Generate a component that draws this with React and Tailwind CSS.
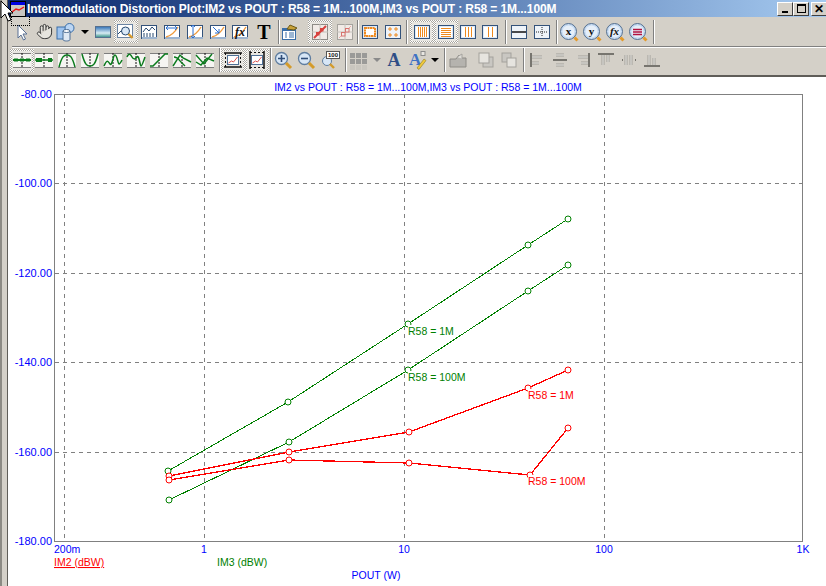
import { Hand } from "lucide-react";

const Ic = ({ children }) => (
  <svg width="20" height="20" viewBox="0 0 20 20" fill="none">
    {children}
  </svg>
);

// plain toolbar slot, sel gets the dotted "pressed" frame
function T({ ml, sel, children }) {
  if (sel) {
    return (
      <div className={`${ml} w-[24px] h-[23px] flex-none p-[2px] bg-[repeating-conic-gradient(#ffffff_0%_25%,#a9a69f_0%_50%)] bg-[length:2px_2px]`}>
        <div className="w-full h-full flex items-center justify-center bg-[#e8e6e1]">{children}</div>
      </div>
    );
  }
  return <div className={`${ml} w-[20px] h-[20px] flex-none flex items-center justify-center`}>{children}</div>;
}

const Sep = ({ ml }) => (
  <div className={`${ml} w-[2px] h-[24px] flex-none border-l border-r border-l-[#808080] border-r-white`} />
);

const Drop = ({ ml, gray }) => (
  <div className={`${ml} w-[8px] flex-none flex justify-center`}>
    <div className={`w-0 h-0 border-l-[4px] border-r-[4px] border-t-[4px] border-l-transparent border-r-transparent ${gray ? "border-t-[#8a8a8a]" : "border-t-black"}`} />
  </div>
);

// --- row 1 icons
const Arrow = () => (
  <Ic>
    <path d="M6 3v13l3-3 2.5 5 2-1-2.5-5h4z" fill="#fff" stroke="#5a7194" />
  </Ic>
);
const Stack = () => (
  <Ic>
    <rect x="1" y="5" width="9" height="12" fill="#9ec3ee" stroke="#3a6ea8" />
    <circle cx="13.5" cy="6" r="4.5" fill="#bcd6f4" stroke="#3a6ea8" />
    <path d="M7 9v8.5c0 2 7 2 7 0V9z" fill="#dfe8f3" stroke="#4f6f95" />
    <ellipse cx="10.5" cy="9" rx="3.5" ry="1.5" fill="#fff" stroke="#4f6f95" />
  </Ic>
);
const Picture = () => (
  <Ic>
    <defs>
      <linearGradient id="sky" x1="0" y1="0" x2="0" y2="1">
        <stop offset="0" stopColor="#2f6fb5" />
        <stop offset="0.6" stopColor="#d7ecf3" />
        <stop offset="1" stopColor="#2f8c83" />
      </linearGradient>
    </defs>
    <rect x="2.5" y="4.5" width="15" height="11" fill="url(#sky)" stroke="#55708f" />
  </Ic>
);
const Frame = ({ children }) => (
  <Ic>
    <rect x="2.5" y="3.5" width="15" height="13" fill="#fff" stroke="#33527a" />
    <rect x="3" y="15" width="15" height="2" fill="#9db4cf" />
    {children}
  </Ic>
);
const Curve = () => <path d="M4 15c5-1 9-5 12-10" stroke="#ef9a3c" strokeWidth="1.4" />;
const ZoomBox = () => (
  <Ic>
    <rect x="1.5" y="2.5" width="15" height="13" fill="#fff" stroke="#6b84a3" />
    <path d="M2 12l3-3 2 1" stroke="#27496f" />
    <circle cx="9.5" cy="9" r="4" fill="#d9e8f7" stroke="#27496f" />
    <path d="M12.5 12l4 4" stroke="#d99a2b" strokeWidth="2.4" />
  </Ic>
);
const ChartTable = () => (
  <Frame>
    <path d="M4 10l3-4 3 3 3-4 3 3" stroke="#27496f" />
    <path d="M4 12h12M4 14h12" stroke="#27496f" strokeDasharray="2 1" />
  </Frame>
);
const FitX = () => (
  <Frame>
    <Curve />
    <path d="M4 6h11M4 6l2-2M4 6l2 2M15 6l-2-2M15 6l-2 2" stroke="#2a6fd0" />
  </Frame>
);
const FitY = () => (
  <Frame>
    <Curve />
    <path d="M8 3v13M8 3l-2 2M8 3l2 2M8 16l-2-2M8 16l2-2" stroke="#2a6fd0" />
  </Frame>
);
const FitD = () => (
  <Frame>
    <Curve />
    <path d="M5 5l6 6M11 11V7M11 11H7" stroke="#2a6fd0" />
  </Frame>
);
const Fx = () => (
  <Frame>
    <Curve />
    <text x="5" y="14" fontFamily="Liberation Serif, serif" fontStyle="italic" fontWeight="700" fontSize="12" fill="#111">fx</text>
  </Frame>
);
const BigT = () => (
  <span className="font-['Liberation_Serif',serif] font-bold text-[20px] leading-none text-black">T</span>
);
const Props = () => (
  <Ic>
    <rect x="2.5" y="6.5" width="13" height="11" fill="#fff" stroke="#3a6ea8" />
    <rect x="3" y="7" width="12" height="2" fill="#3a6ea8" />
    <path d="M5 11h2M9 11h5M5 13h2M9 13h5M5 15h2M9 15h5" stroke="#3a6ea8" />
    <path d="M7 7l3-4 7 3-3 2z" fill="#c9a23a" stroke="#6d5a16" />
  </Ic>
);
const Dots = ({ faded }) => (
  <Ic>
    <rect x="2.5" y="2.5" width="15" height="15" fill="#f1ebe7" stroke={faded ? "#a5a39e" : "#8e8c87"} />
    <path d="M2 10h16M10 2v16" stroke="#c4c1bb" />
    <path d="M4 16L16 4" stroke={faded ? "#e6a9a5" : "#d8423e"} strokeWidth={faded ? 1 : 2} />
    <rect x={faded ? 6.5 : 6} y={faded ? 10.5 : 10} width="3.5" height="3.5" fill={faded ? "#f1ebe7" : "#d8423e"} stroke={faded ? "#d8726e" : "none"} />
    <rect x={faded ? 10.5 : 10} y={faded ? 6.5 : 6} width="3.5" height="3.5" fill={faded ? "#f1ebe7" : "#d8423e"} stroke={faded ? "#d8726e" : "none"} />
  </Ic>
);
const OrangeBox = () => (
  <Ic>
    <rect x="2.5" y="3.5" width="15" height="13" fill="#dfe9f5" stroke="#33527a" />
    <rect x="5" y="6" width="10" height="8" fill="#fff" stroke="#ef8a1e" strokeWidth="2" strokeDasharray="2 0.5" />
  </Ic>
);
const Plus4 = () => (
  <Ic>
    <rect x="2.5" y="3.5" width="15" height="13" fill="#eef3f9" stroke="#33527a" />
    <path d="M7 5v4M5 7h4M13 5v4M11 7h4M7 11v4M5 13h4M13 11v4M11 13h4" stroke="#ef8a1e" />
  </Ic>
);
const Bars = ({ n, horiz }) => {
  const xs = n === 5 ? [6, 8, 10, 12, 14] : n === 3 ? [7, 10, 13] : [8, 12];
  return (
    <Ic>
      <rect x="2.5" y="3.5" width="15" height="13" fill="#dfe9f5" stroke="#33527a" />
      <rect x="4" y="5" width="12" height="10" fill="#fff" />
      {xs.map((x) =>
        horiz ? (
          <path key={x} d={`M5 ${x + 0.5}h10`} stroke="#ef8a1e" />
        ) : (
          <path key={x} d={`M${x + 0.5} 5v10`} stroke="#ef8a1e" />
        )
      )}
    </Ic>
  );
};
const HLine = () => (
  <Ic>
    <rect x="2.5" y="3.5" width="15" height="13" fill="#eef3f9" stroke="#33527a" />
    <path d="M3 10h14" stroke="#111" strokeWidth="1.5" />
  </Ic>
);
const Cross = () => (
  <Ic>
    <rect x="2.5" y="3.5" width="15" height="13" fill="#eef3f9" stroke="#33527a" />
    <path d="M4 10h12M10 5v10" stroke="#222" strokeDasharray="1 1" />
  </Ic>
);
const Lens = ({ children }) => (
  <Ic>
    <circle cx="9.5" cy="9.5" r="8" fill="#c5daf2" stroke="#55708f" />
    <circle cx="9.5" cy="9.5" r="6" fill="#e6eff9" />
    <path d="M15.5 15.5l3 3" stroke="#e49a2a" strokeWidth="3" />
    {children}
  </Ic>
);
const LensLetter = ({ c, italic }) => (
  <Lens>
    <text x="9.5" y="13" textAnchor="middle" fontFamily="Liberation Serif, serif" fontWeight="700" fontStyle={italic ? "italic" : "normal"} fontSize="11" fill="#111">
      {c}
    </text>
  </Lens>
);
const LensLines = () => (
  <Lens>
    <path d="M5 7.5h9M5 10h9M5 12.5h9" stroke="#b3123f" strokeWidth="1.4" />
  </Lens>
);

// --- row 2 icons, green trace over a dashed centre line
const Trace = ({ children }) => (
  <Ic>
    <rect x="1" y="3" width="18" height="14" fill="#f6f5f2" />
    <path d="M1 3.5h18M1 17.5h18" stroke="#7d7d7d" />
    <path d="M10 3v15" stroke="#111" strokeDasharray="2 1" />
    {children}
  </Ic>
);
const G = ({ d, w = 1.4 }) => <path d={d} stroke="#0a7a1c" strokeWidth={w} />;
const MagGlass = ({ sign }) => (
  <Ic>
    <circle cx="8.5" cy="8.5" r="6" fill="#d7e6f6" stroke="#5f7d9f" strokeWidth="1.3" />
    <path d="M13 13l5 5" stroke="#d49b2a" strokeWidth="3" />
    <path d={sign === "+" ? "M5 8.5h7M8.5 5v7" : "M5 8.5h7"} stroke="#2f4d78" strokeWidth="1.6" />
  </Ic>
);
const Mag100 = () => (
  <Ic>
    <circle cx="7" cy="11" r="4.5" fill="#d7e6f6" stroke="#5f7d9f" />
    <path d="M10 14l4 4" stroke="#d49b2a" strokeWidth="2.4" />
    <rect x="6.5" y="1.5" width="13" height="7" fill="#fff" stroke="#555" />
    <text x="13" y="7.4" textAnchor="middle" fontFamily="Liberation Sans, sans-serif" fontWeight="700" fontSize="6" fill="#111">100</text>
  </Ic>
);
const Tiles = () => (
  <Ic>
    {[3, 9, 15].map((y) =>
      [2, 8, 14].map((x) => <rect key={`${x}${y}`} x={x} y={y} width="5" height="5" fill={y === 15 ? "#c9c6bf" : "#9a9a98"} />)
    )}
  </Ic>
);
const LetterA = () => (
  <span className="font-['Liberation_Serif',serif] font-bold text-[18px] leading-none text-[#2f4e86]">A</span>
);
const LetterPen = () => (
  <Ic>
    <text x="1" y="15" fontFamily="Liberation Serif, serif" fontWeight="700" fontSize="17" fill="#3f72c4">A</text>
    <path d="M9 18l7-9 2 1.5-7 9z" fill="#f0c93b" stroke="#8d7a22" strokeWidth="0.6" />
    <rect x="13" y="1.5" width="4" height="4" fill="#e9e7e2" stroke="#8d8d8d" />
  </Ic>
);
const Layer = () => (
  <Ic>
    <path d="M2 9h6l3-4 1 3h6v9H2z" fill="#b5b3ae" stroke="#8e8c87" />
    <path d="M9 7l5-3v5" fill="#dedcd7" stroke="#a5a39e" />
  </Ic>
);
const Front = () => (
  <Ic>
    <rect x="7" y="7" width="10" height="10" fill="#c9c7c2" stroke="#a3a19c" />
    <rect x="3" y="3" width="10" height="10" fill="#e6e4df" stroke="#a3a19c" />
  </Ic>
);
const Back = () => (
  <Ic>
    <rect x="3" y="3" width="9" height="9" fill="#c9c7c2" stroke="#a3a19c" />
    <rect x="8" y="8" width="9" height="9" fill="#e6e4df" stroke="#a3a19c" />
  </Ic>
);
const Align = ({ d, bar }) => (
  <Ic>
    <path d={bar} stroke="#77756f" strokeWidth="2" />
    <path d={d} stroke="#a19f99" strokeWidth="3" />
    <path d={d} stroke="#ecebe7" strokeWidth="1" />
  </Ic>
);

const row1Bar = "h-[29px] flex items-center";
const row2Bar = "h-[27px] pb-[3px] flex items-center";

function Toolbars() {
  return (
    <div className="bg-[#d4d0c8] border-b-2 border-b-[#5f5d58]">
      <div className={row1Bar}>
        <T ml="ml-[4px]"><Arrow /></T>
        <T ml="ml-[2px]"><Hand size={17} strokeWidth={1.4} color="#333" fill="#e6e4de" /></T>
        <T ml="ml-[2px]"><Stack /></T>
        <Drop ml="ml-[5px]" />
        <T ml="ml-[4px]"><Picture /></T>
        <T ml="ml-[1px]" sel><ZoomBox /></T>
        <T ml="ml-[1px]"><ChartTable /></T>
        <T ml="ml-[3px]"><FitX /></T>
        <T ml="ml-[3px]"><FitY /></T>
        <T ml="ml-[3px]"><FitD /></T>
        <T ml="ml-[2px]"><Fx /></T>
        <T ml="ml-[4px]"><BigT /></T>
        <Sep ml="ml-[4px]" />
        <T ml="ml-0"><Props /></T>
        <T ml="ml-[8px]" sel><Dots /></T>
        <T ml="ml-[3px]"><Dots faded /></T>
        <Sep ml="ml-[2px]" />
        <T ml="ml-[1px]"><OrangeBox /></T>
        <T ml="ml-[3px]"><Plus4 /></T>
        <Sep ml="ml-[3px]" />
        <T ml="ml-[2px]" sel><Bars n={5} /></T>
        <T ml="ml-0" sel><Bars n={5} horiz /></T>
        <T ml="ml-0"><Bars n={3} /></T>
        <T ml="ml-[2px]"><Bars n={2} /></T>
        <Sep ml="ml-[5px]" />
        <T ml="ml-[2px]"><HLine /></T>
        <T ml="ml-[3px]"><Cross /></T>
        <Sep ml="ml-[4px]" />
        <T ml="ml-[1px]"><LensLetter c="x" /></T>
        <T ml="ml-[3px]"><LensLetter c="y" /></T>
        <T ml="ml-[3px]"><LensLetter c="fx" italic /></T>
        <T ml="ml-[3px]"><LensLines /></T>
        <Sep ml="ml-[5px]" />
      </div>
      <div className="ml-[4px] h-[2px] border-t border-b border-t-[#808080] border-b-white" />
      <div className={row2Bar}>
        <T ml="ml-[2px]" sel>
          <Trace><G d="M1 10h18" w={2} /><rect x="2" y="8.5" width="4" height="3" fill="#0a7a1c" /><rect x="8" y="8.5" width="4" height="3" fill="#0a7a1c" /><rect x="14" y="8.5" width="4" height="3" fill="#0a7a1c" /></Trace>
        </T>
        <T ml="ml-0">
          <Trace><G d="M1 10h18" w={1.5} /><rect x="2" y="8" width="6" height="4" fill="#0a7a1c" /><rect x="14" y="8" width="4" height="4" fill="#0a7a1c" /></Trace>
        </T>
        <T ml="ml-[3px]"><Trace><G d="M2 17C5 6 7 5 10 5s5 1 8 12" w={1.5} /></Trace></T>
        <T ml="ml-[3px]"><Trace><G d="M2 4c3 11 5 12 8 12s5-1 8-12" w={1.5} /></Trace></T>
        <T ml="ml-[3px]"><Trace><G d="M1 16c3-7 4-5 6-2s3-9 5-9 3 9 4 9 2-2 3-4" w={1.5} /></Trace></T>
        <T ml="ml-[3px]"><Trace><G d="M1 7c2-5 4-2 5 0s3 3 5 0 3 9 4 9 3-6 4-9" w={1.5} /></Trace></T>
        <T ml="ml-[3px]"><Trace><G d="M1 16h3L16 4h3" w={1.5} /></Trace></T>
        <T ml="ml-[3px]"><Trace><G d="M1 16L8 5l3 3 8 4" /><G d="M2 7c4 0 5 3 7 5l4 4" /></Trace></T>
        <T ml="ml-[3px]"><Trace><G d="M1 5l8 9 8-10" /><G d="M1 12l5 3 6-7 7 3" /></Trace></T>
        <Sep ml="ml-[4px]" />
        <T ml="ml-0" sel>
          <Ic>
            <rect x="4.5" y="5.5" width="11" height="9" fill="#fff" stroke="#4f6f95" />
            <path d="M5.5 13l3-2 2 1 4-5" stroke="#d9534f" />
            <path d="M1 3h18M1 17h18" stroke="#111" strokeWidth="1.5" />
            <path d="M2.5 3v14M17.5 3v14" stroke="#111" strokeDasharray="2 2" />
          </Ic>
        </T>
        <T ml="ml-0" sel>
          <Ic>
            <rect x="4.5" y="5.5" width="11" height="9" fill="#fff" stroke="#4f6f95" />
            <path d="M5.5 13l3-2 2 1 4-5" stroke="#d9534f" />
            <path d="M3 1v18M17 1v18" stroke="#111" strokeWidth="1.5" />
            <path d="M3 2.5h14M3 17.5h14" stroke="#111" strokeDasharray="2 2" />
          </Ic>
        </T>
        <Sep ml="ml-[1px]" />
        <T ml="ml-[1px]"><MagGlass sign="+" /></T>
        <T ml="ml-[3px]"><MagGlass sign="-" /></T>
        <T ml="ml-[4px]"><Mag100 /></T>
        <Sep ml="ml-[5px]" />
        <T ml="ml-[1px]"><Tiles /></T>
        <Drop ml="ml-[5px]" gray />
        <T ml="ml-[3px]"><LetterA /></T>
        <T ml="ml-[4px]"><LetterPen /></T>
        <Drop ml="ml-[3px]" />
        <Sep ml="ml-[5px]" />
        <T ml="ml-[2px]"><Layer /></T>
        <T ml="ml-[8px]"><Front /></T>
        <T ml="ml-[3px]"><Back /></T>
        <Sep ml="ml-[4px]" />
        <T ml="ml-[2px]"><Align bar="M4 3v14" d="M5 7h10M5 13h7" /></T>
        <T ml="ml-[3px]"><Align bar="M3 10h14" d="M6 5h8M6 15h8" /></T>
        <T ml="ml-[3px]"><Align bar="M16 3v14" d="M5 7h10M8 13h7" /></T>
        <T ml="ml-[3px]"><Align bar="M2 4h16" d="M7 5v10M12 5v7" /></T>
        <T ml="ml-[3px]"><Align bar="M3 10h1M16 10h1" d="M7 5v10M12 5v10" /></T>
        <T ml="ml-[3px]"><Align bar="M2 16h16" d="M7 5v10M12 8v7" /></T>
      </div>
    </div>
  );
}

function TitleBar() {
  return (
    <div className="h-[17px] pl-[2px] flex items-center bg-linear-to-r from-[#0a246a] to-[#a6caf0]">
      <svg width="16" height="16" viewBox="0 0 16 16" className="flex-none">
        <rect x="0.5" y="0.5" width="15" height="15" fill="#c9c6c0" stroke="#000" />
        <rect x="1" y="1" width="14" height="3" fill="#0000e0" />
        <path d="M2 11l4-3 3 1 5-3" stroke="#ee1111" strokeWidth="1.4" fill="none" />
      </svg>
      <span className="ml-[1px] font-['Liberation_Sans',sans-serif] font-bold text-[12px] tracking-[-0.08px] text-white whitespace-nowrap">
        Intermodulation Distortion Plot:IM2 vs POUT : R58 = 1M...100M,IM3 vs POUT : R58 = 1M...100M
      </span>
      <div className="ml-auto -mr-[1px] flex gap-0">
        <WinBtn><div className="mt-[6px] w-[6px] h-[2px] bg-black" /></WinBtn>
        <WinBtn><div className="w-[9px] h-[9px] border border-black border-t-2" /></WinBtn>
        <WinBtn ml="ml-[2px]"><span className="font-['Liberation_Sans',sans-serif] font-bold text-[12px] leading-none text-black">✕</span></WinBtn>
      </div>
    </div>
  );
}

const WinBtn = ({ ml = "", children }) => (
  <div className={`${ml} w-[16px] h-[14px] flex items-center justify-center bg-[#d4d0c8] border border-t-white border-l-white border-r-[#404040] border-b-[#404040]`}>
    {children}
  </div>
);

// values are pixel positions inside the plot, the screenshot has no data behind it
const traces = [
  { color: "#008000", pts: [[168, 471], [288, 402], [408, 324], [528, 245], [568, 219]] },
  { color: "#008000", pts: [[169, 500], [289, 442], [408, 370], [528, 291], [568, 265]] },
  { color: "#ff0000", pts: [[169, 476], [289, 452], [409, 432], [528, 388], [568, 370]] },
  { color: "#ff0000", pts: [[169, 480], [289, 460], [409, 463], [530, 475], [568, 428]] },
];
const labels = [
  { x: 408, y: 325, w: 46, text: "R58 = 1M", color: "#008000" },
  { x: 408, y: 371, w: 59, text: "R58 = 100M", color: "#008000" },
  { x: 528, y: 389, w: 46, text: "R58 = 1M", color: "#ff0000" },
  { x: 528, y: 475, w: 59, text: "R58 = 100M", color: "#ff0000" },
];
const yTicks = [
  [94, "-80.00"],
  [183, "-100.00"],
  [273, "-120.00"],
  [362, "-140.00"],
  [452, "-160.00"],
  [541, "-180.00"],
];
const xTicks = [
  [204, "1"],
  [404, "10"],
  [604, "100"],
  [803, "1K"],
];

function Plot() {
  // svg is offset 8,77 inside the window, so shift everything by that
  return (
    <svg width="818" height="509" viewBox="8 77 818 509" className="block font-['Liberation_Sans',sans-serif] text-[10.5px]">
      <g shapeRendering="crispEdges" stroke="#808080" fill="none">
        {[64, 204, 404, 604].map((x) => (
          <path key={x} d={`M${x + 0.5} 94V541`} strokeDasharray="4 4" />
        ))}
        {[183, 273, 362, 452].map((y) => (
          <path key={y} d={`M55 ${y + 0.5}H802`} strokeDasharray="4 4" />
        ))}
        <rect x="54.5" y="94.5" width="748" height="447" />
      </g>
      {traces.map((t, i) => (
        <g key={i} fill="#fff" stroke={t.color} shapeRendering="crispEdges">
          <polyline points={t.pts.map((p) => p.join(",")).join(" ")} fill="none" strokeWidth={t.color === "#ff0000" ? 1.3 : 1} />
          {t.pts.map((p) => (
            <circle key={p[0]} cx={p[0]} cy={p[1]} r="3" shapeRendering="auto" />
          ))}
        </g>
      ))}
      {labels.map((l) => (
        <g key={l.x + l.text + l.y}>
          <rect x={l.x} y={l.y} width={l.w} height="12" fill="#fff" />
          <text x={l.x} y={l.y + 10} fill={l.color}>{l.text}</text>
        </g>
      ))}
      <g fill="#0000ff">
        <text x="428" y="91" textAnchor="middle">IM2 vs POUT : R58 = 1M...100M,IM3 vs POUT : R58 = 1M...100M</text>
        {yTicks.map(([y, s]) => (
          <text key={s} x="52" y={y + 4} textAnchor="end" fontSize="11">{s}</text>
        ))}
        <text x="54" y="553">200m</text>
        {xTicks.map(([x, s]) => (
          <text key={s} x={x} y="553" textAnchor="middle">{s}</text>
        ))}
        <text x="376" y="579" textAnchor="middle">POUT (W)</text>
      </g>
      <text x="54" y="566" fill="#ff0000" textDecoration="underline">IM2 (dBW)</text>
      <text x="217" y="566" fill="#008000">IM3 (dBW)</text>
    </svg>
  );
}

export default function App() {
  return (
    <div className="relative w-[826px] h-[586px] overflow-hidden bg-white flex">
      <div className="w-[8px] flex-none bg-[#d4d0c8] border-r border-r-[#5f5d58] border-l-2 border-l-[#8c8a84]" />
      <div className="flex-1 min-w-0 flex flex-col">
        <TitleBar />
        <Toolbars />
        <Plot />
      </div>
      {/* mouse cursor and its dotted drag box, part of the capture */}
      <div className="absolute left-[11px] top-[16px] w-[19px] h-[10px] border border-t-0 border-dotted border-black" />
      <svg width="14" height="22" viewBox="0 0 14 22" className="absolute left-0 top-0">
        <path d="M1 1v17l4-4 3 7 3-1-3-7h5z" fill="#fff" stroke="#000" />
      </svg>
    </div>
  );
}
